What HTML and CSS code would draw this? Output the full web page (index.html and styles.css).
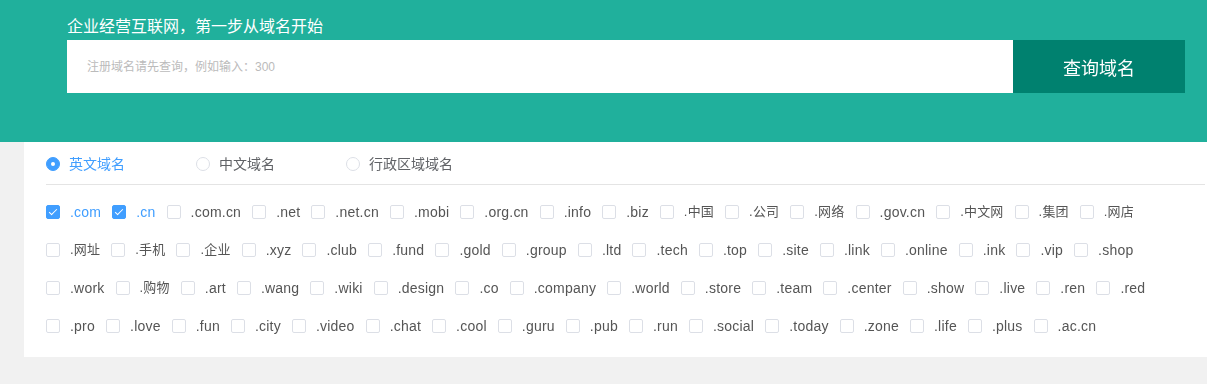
FILE: index.html
```html
<!DOCTYPE html>
<html lang="zh-CN">
<head>
    <meta charset="UTF-8">
    <meta name="viewport" content="width=device-width, initial-scale=1.0">
    <title>域名查询</title>
    <link rel="stylesheet" href="styles.css">
</head>
<body>
    <div class="banner">
        <h2 class="slogan">企业经营互联网，第一步从域名开始</h2>
        <div class="search">
            <input type="text" class="search-input" placeholder="注册域名请先查询，例如输入：300" autofocus>
            <button class="search-btn">查询域名</button>
        </div>
    </div>

    <div class="panel">
        <div class="tabs">
            <label class="radio checked"><span class="dot"></span>英文域名</label>
            <label class="radio"><span class="dot"></span>中文域名</label>
            <label class="radio"><span class="dot"></span>行政区域域名</label>
        </div>

        <div class="suffix-row">
            <label class="check checked"><span class="box"></span>.com</label>
            <label class="check checked"><span class="box"></span>.cn</label>
            <label class="check"><span class="box"></span>.com.cn</label>
            <label class="check"><span class="box"></span>.net</label>
            <label class="check"><span class="box"></span>.net.cn</label>
            <label class="check"><span class="box"></span>.mobi</label>
            <label class="check"><span class="box"></span>.org.cn</label>
            <label class="check"><span class="box"></span>.info</label>
            <label class="check"><span class="box"></span>.biz</label>
            <label class="check zh"><span class="box"></span>.中国</label>
            <label class="check zh"><span class="box"></span>.公司</label>
            <label class="check zh"><span class="box"></span>.网络</label>
            <label class="check"><span class="box"></span>.gov.cn</label>
            <label class="check zh"><span class="box"></span>.中文网</label>
            <label class="check zh"><span class="box"></span>.集团</label>
            <label class="check zh"><span class="box"></span>.网店</label>
        </div>
        <div class="suffix-row">
            <label class="check zh"><span class="box"></span>.网址</label>
            <label class="check zh"><span class="box"></span>.手机</label>
            <label class="check zh"><span class="box"></span>.企业</label>
            <label class="check"><span class="box"></span>.xyz</label>
            <label class="check"><span class="box"></span>.club</label>
            <label class="check"><span class="box"></span>.fund</label>
            <label class="check"><span class="box"></span>.gold</label>
            <label class="check"><span class="box"></span>.group</label>
            <label class="check"><span class="box"></span>.ltd</label>
            <label class="check"><span class="box"></span>.tech</label>
            <label class="check"><span class="box"></span>.top</label>
            <label class="check"><span class="box"></span>.site</label>
            <label class="check"><span class="box"></span>.link</label>
            <label class="check"><span class="box"></span>.online</label>
            <label class="check"><span class="box"></span>.ink</label>
            <label class="check"><span class="box"></span>.vip</label>
            <label class="check"><span class="box"></span>.shop</label>
        </div>
        <div class="suffix-row">
            <label class="check"><span class="box"></span>.work</label>
            <label class="check zh"><span class="box"></span>.购物</label>
            <label class="check"><span class="box"></span>.art</label>
            <label class="check"><span class="box"></span>.wang</label>
            <label class="check"><span class="box"></span>.wiki</label>
            <label class="check"><span class="box"></span>.design</label>
            <label class="check"><span class="box"></span>.co</label>
            <label class="check"><span class="box"></span>.company</label>
            <label class="check"><span class="box"></span>.world</label>
            <label class="check"><span class="box"></span>.store</label>
            <label class="check"><span class="box"></span>.team</label>
            <label class="check"><span class="box"></span>.center</label>
            <label class="check"><span class="box"></span>.show</label>
            <label class="check"><span class="box"></span>.live</label>
            <label class="check"><span class="box"></span>.ren</label>
            <label class="check"><span class="box"></span>.red</label>
        </div>
        <div class="suffix-row">
            <label class="check"><span class="box"></span>.pro</label>
            <label class="check"><span class="box"></span>.love</label>
            <label class="check"><span class="box"></span>.fun</label>
            <label class="check"><span class="box"></span>.city</label>
            <label class="check"><span class="box"></span>.video</label>
            <label class="check"><span class="box"></span>.chat</label>
            <label class="check"><span class="box"></span>.cool</label>
            <label class="check"><span class="box"></span>.guru</label>
            <label class="check"><span class="box"></span>.pub</label>
            <label class="check"><span class="box"></span>.run</label>
            <label class="check"><span class="box"></span>.social</label>
            <label class="check"><span class="box"></span>.today</label>
            <label class="check"><span class="box"></span>.zone</label>
            <label class="check"><span class="box"></span>.life</label>
            <label class="check"><span class="box"></span>.plus</label>
            <label class="check"><span class="box"></span>.ac.cn</label>
        </div>
    </div>
</body>
</html>
```

FILE: styles.css
```css
body {
    margin: 0;
    background-color: #f1f1f1;
    font-family: "Liberation Sans", "Noto Sans CJK SC", sans-serif;
    color: #555;
}

.banner {
    height: 142px;
    box-sizing: border-box;
    padding: 17px 0 0 67px;
    background-color: #20b09c;
}

.slogan {
    margin: 0 0 3px;
    font-size: 16px;
    font-weight: normal;
    line-height: 20px;
    color: #fff;
}

.search {
    display: flex;
    width: 1118px;
    height: 53px;
}

.search-input {
    flex: 1;
    border: none;
    outline: none;
    padding: 0 20px;
    font-family: inherit;
    font-size: 12px;
    color: #333;
}

.search-input::placeholder {
    color: #bbb;
}

.search-btn {
    width: 172px;
    border: none;
    background-color: #00816f;
    color: #fff;
    font-family: inherit;
    font-size: 18px;
    cursor: pointer;
}

.panel {
    margin-left: 24px;
    padding: 0 2px 12px 22px;
    background-color: #fff;
}

.tabs {
    display: flex;
    padding: 12px 0 10px;
    border-bottom: 1px solid #e4e4e4;
    margin-bottom: 8px;
}

.radio {
    display: flex;
    align-items: center;
    line-height: 20px;
    font-size: 14px;
    color: #606266;
    margin-right: 71px;
}

.radio .dot {
    width: 12px;
    height: 12px;
    border: 1px solid #dcdfe6;
    border-radius: 50%;
    margin-right: 9px;
}

.radio.checked {
    color: #409eff;
}

.radio.checked .dot {
    position: relative;
    background-color: #409eff;
    border-color: #409eff;
}

.radio.checked .dot::after {
    content: "";
    position: absolute;
    left: 4px;
    top: 4px;
    width: 4px;
    height: 4px;
    border-radius: 50%;
    background-color: #fff;
}

.suffix-row {
    display: flex;
    align-items: center;
    height: 38px;
}

.check {
    display: flex;
    align-items: center;
    font-size: 14px;
    line-height: 18px;
    letter-spacing: 0.22px;
    color: #555;
    margin-right: 11px;
}

.check.zh {
    font-size: 13px;
    letter-spacing: 0.2px;
}

.check .box {
    width: 12px;
    height: 12px;
    border: 1px solid #dcdfe6;
    border-radius: 2px;
    margin-right: 10px;
}

.check.checked {
    color: #409eff;
}

.check.checked .box {
    position: relative;
    background-color: #409eff;
    border-color: #409eff;
}

.check.checked .box::after {
    content: "";
    position: absolute;
    left: 4px;
    top: 1px;
    width: 3px;
    height: 7px;
    border: 1px solid #fff;
    border-left: 0;
    border-top: 0;
    transform: rotate(45deg);
}
```
